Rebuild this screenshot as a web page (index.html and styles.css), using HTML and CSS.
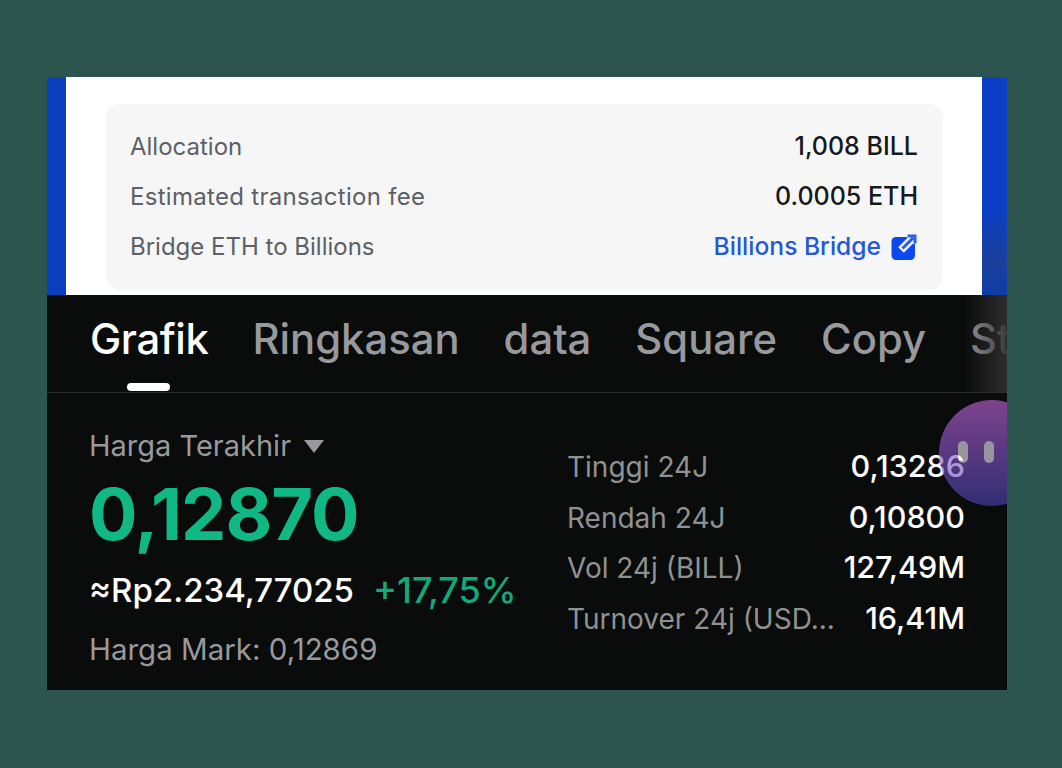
FILE: index.html
```html
<!DOCTYPE html>
<html lang="id">
<head>
  <meta charset="UTF-8">
  <title>BILL</title>
  <link rel="stylesheet" href="styles.css">
</head>
<body>
  <div class="frame">
    <div class="top-panel">
      <div class="fee-card">
        <div class="fee-row">
          <span>Allocation</span>
          <span class="fee-value">1,008 BILL</span>
        </div>
        <div class="fee-row">
          <span class="fee-wide">Estimated transaction fee</span>
          <span class="fee-value">0.0005 ETH</span>
        </div>
        <div class="fee-row">
          <span>Bridge ETH to Billions</span>
          <span class="fee-link">Billions Bridge
            <svg class="link-icon" width="27" height="27" viewBox="0 0 27 27">
              <rect x="0.500" y="4" width="23.500" height="23" rx="4.500" fill="#0b49ee"/>
              <path d="M10 17L26 1" fill="none" stroke="#f5f5f6" stroke-width="8"/>
              <path d="M16 3.500H23.500V11" fill="none" stroke="#f5f5f6" stroke-width="6"/>
              <path d="M11.500 15.500L22 5M16.500 3H24V10.500" fill="none" stroke="#2a5cf0" stroke-width="3"/>
            </svg>
          </span>
        </div>
      </div>
    </div>
    <div class="market-panel">
      <div class="tabs">
        <span class="tab tab-active">Grafik</span>
        <span class="tab">Ringkasan</span>
        <span class="tab">data</span>
        <span class="tab">Square</span>
        <span class="tab">Copy</span>
        <span class="tab">St</span>
        <div class="tabs-fade"></div>
      </div>
      <div class="market-body">
        <div class="price-col">
          <div class="price-label">Harga Terakhir <span class="caret"></span></div>
          <div class="price-big">0,12870</div>
          <div class="price-sub">
            <span class="price-idr">≈Rp2.234,77025</span>
            <span class="price-change">+17,75%</span>
          </div>
          <div class="price-label price-mark">Harga Mark: 0,12869</div>
        </div>
        <div class="stats-col">
          <div class="stat-row"><span class="stat-name">Tinggi 24J</span><span class="stat-value">0,13286</span></div>
          <div class="stat-row"><span class="stat-name">Rendah 24J</span><span class="stat-value">0,10800</span></div>
          <div class="stat-row"><span class="stat-name">Vol 24j (BILL)</span><span class="stat-value">127,49M</span></div>
          <div class="stat-row"><span class="stat-name">Turnover 24j (USD...</span><span class="stat-value">16,41M</span></div>
        </div>
      </div>
      <div class="chat-bubble">
        <span class="chat-eye"></span>
        <span class="chat-eye"></span>
      </div>
    </div>
  </div>
</body>
</html>
```

FILE: styles.css
```css
body {
  margin: 0;
  background-color: #2c5550;
  font-family: Inter, "Liberation Sans", sans-serif;
}

.frame {
  width: 960px;
  margin: 77px 0 0 47px;
}

.top-panel {
  display: flex;
  height: 218px;
  box-sizing: border-box;
  padding-top: 27px;
  background: linear-gradient(to right, #0b3fbe 19px, #fff 19px, #fff 935px, transparent 935px),
    linear-gradient(to bottom, #0a3fc6 60%, #1a409c 85%, #0e3ca8);
}

.fee-card {
  width: 837px;
  height: 186px;
  margin-left: 59px;
  box-sizing: border-box;
  padding: 17px 25px 0 24px;
  background-color: #f6f6f7;
  border-radius: 14px;
}

.fee-row {
  display: flex;
  justify-content: space-between;
  align-items: center;
  height: 50px;
  font-size: 24px;
  color: #5c5f66;
}

.fee-wide {
  letter-spacing: 0.3px;
}

.fee-value {
  font-size: 25px;
  font-weight: 500;
  color: #17181a;
}

.fee-link {
  display: flex;
  align-items: center;
  gap: 10px;
  font-size: 24.600px;
  font-weight: 500;
  color: #2458d8;
}

.market-panel {
  position: relative;
  height: 395px;
  background-color: #0a0b0b;
  overflow: hidden;
}

.tabs {
  position: relative;
  display: flex;
  gap: 44px;
  height: 98px;
  padding: 20px 0 0 43px;
  box-sizing: border-box;
  border-bottom: 1px solid #2b2c2c;
  overflow: hidden;
  white-space: nowrap;
}

.tab {
  position: relative;
  font-size: 41.800px;
  font-weight: 500;
  line-height: 48px;
  color: #98999d;
}

.tab-active {
  color: #fff;
  letter-spacing: -0.4px;
}

.tab-active::after {
  content: "";
  position: absolute;
  left: 37px;
  top: 68px;
  width: 43px;
  height: 8px;
  border-radius: 4px;
  background-color: #fff;
}

.tabs-fade {
  position: absolute;
  top: 0;
  right: 0;
  bottom: 0;
  width: 44px;
  background: linear-gradient(to right, rgba(10, 11, 11, 0), rgba(50, 48, 48, 0.9));
}

.market-body {
  display: flex;
  justify-content: space-between;
  padding: 32px 42px 0 42px;
}

.price-label {
  font-size: 29px;
  line-height: 42px;
  color: #98999d;
}

.caret {
  display: inline-block;
  width: 0;
  height: 0;
  margin: 0 0 3px 5px;
  border-left: 10px solid transparent;
  border-right: 10px solid transparent;
  border-top: 13px solid #98999d;
}

.price-big {
  margin-top: 5px;
  font-size: 72px;
  font-weight: 700;
  line-height: 84px;
  letter-spacing: -1px;
  color: #10b886;
}

.price-sub {
  display: flex;
  align-items: center;
  gap: 19px;
  margin-top: 9px;
  height: 50px;
}

.price-idr {
  font-size: 33px;
  font-weight: 500;
  color: #fff;
}

.price-change {
  font-size: 36px;
  font-weight: 500;
  color: #12a97c;
}

.price-mark {
  margin-top: 13px;
  font-size: 29.500px;
}

.stats-col {
  width: 398px;
  padding-top: 16px;
}

.stat-row {
  display: flex;
  justify-content: space-between;
  align-items: baseline;
  height: 50.500px;
  line-height: 50.500px;
  font-size: 28px;
}

.stat-name {
  color: #909192;
}

.stat-value {
  font-size: 30.500px;
  font-weight: 500;
  color: #fff;
}

.chat-bubble {
  position: absolute;
  left: 892px;
  top: 105px;
  width: 106px;
  height: 106px;
  box-sizing: border-box;
  padding-top: 41px;
  padding-left: 19px;
  display: flex;
  gap: 16px;
  align-items: flex-start;
  border-radius: 50%;
  background: linear-gradient(to bottom, #cb69e3, #4d46bb);
  opacity: 0.6;
}

.chat-eye {
  width: 10px;
  height: 22px;
  border-radius: 5px;
  background-color: #f5f2ff;
}
```
